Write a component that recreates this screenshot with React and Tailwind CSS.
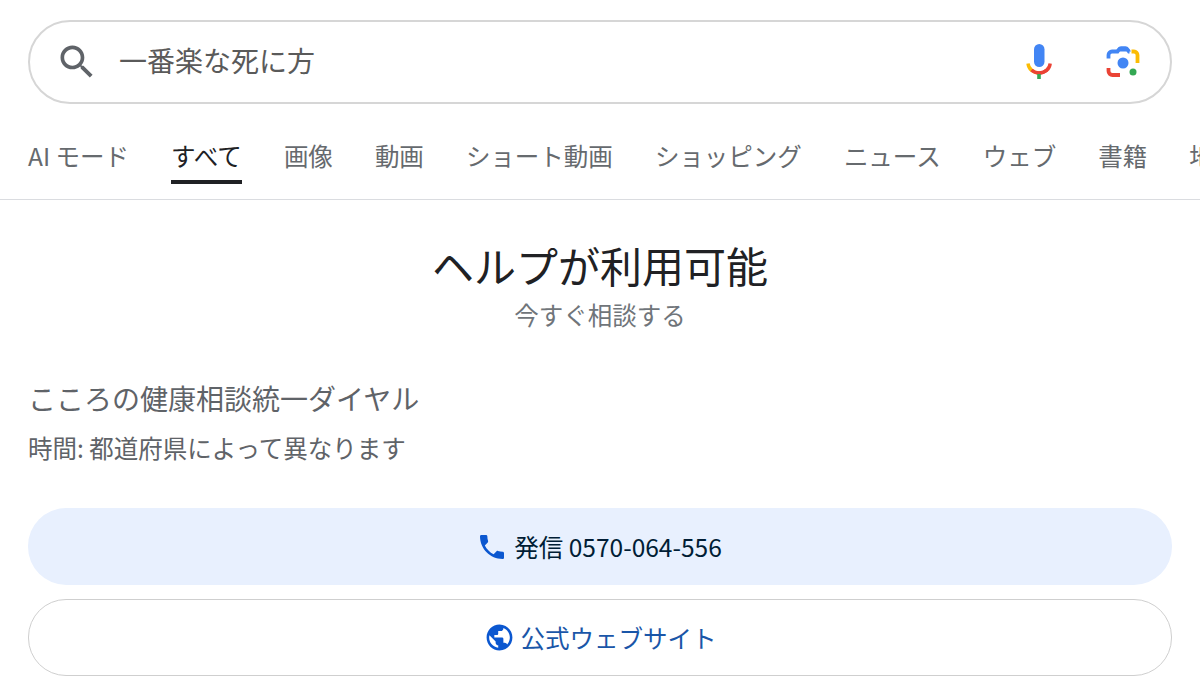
const tabs = ['AI モード', 'すべて', '画像', '動画', 'ショート動画', 'ショッピング', 'ニュース', 'ウェブ', '書籍', '地図'];

function MicIcon() {
  return (
    <svg width="32" height="40" viewBox="0 0 32 40" fill="none">
      <rect x="10" y="2" width="10.5" height="23" rx="5.25" fill="#4285f4" />
      <path d="M4 21.5c.6 5.800 5.500 9.500 11.200 9.500" stroke="#fbbc04" strokeWidth="3.400" />
      <path d="M15 31c5.700 0 10.600-3.700 11.200-9.500" stroke="#ea4335" strokeWidth="3.400" />
      <path d="M7.500 28c2.300 2 4.900 3 7.700 3s5.400-1 7.700-3" stroke="#ea4335" strokeWidth="3.400" />
      <rect x="13.200" y="32" width="3.600" height="5" fill="#34a853" />
    </svg>
  );
}

function LensIcon() {
  return (
    <svg width="40" height="40" viewBox="0 0 40 40" fill="none">
      <path d="M5.500 16.500v-3.500c0-2 1.500-3.500 3.500-3.500h5.500l1.800-2.500c.4-.6 1-.9 1.700-.9h4.500c.7 0 1.300.3 1.700.9l1.800 2.500h.5" stroke="#4285f4" strokeWidth="3.800" />
      <path d="M12 9.500l3.500-4h9l3.500 4z" fill="#4285f4" />
      <path d="M28.500 9.500h2.500c2 0 3.500 1.500 3.500 3.500v8" stroke="#fbbc04" strokeWidth="3.800" />
      <path d="M5.500 26v3c0 2.300 1.700 4 4 4h7.500" stroke="#ea4335" strokeWidth="3.800" />
      <circle cx="20" cy="21" r="5.500" fill="#4285f4" />
      <circle cx="30" cy="30" r="3.500" fill="#34a853" />
    </svg>
  );
}

export default function App() {
  return (
    <div className="w-[1200px] h-[696px] overflow-hidden bg-white font-['Noto_Sans_CJK_JP','Noto_Sans',sans-serif] text-[#4d5156]">
      <div className="pt-5 px-7">
        <div className="h-[84px] border-2 border-[#d6d6d6] rounded-[42px] flex items-center pl-[25px] pr-[27px]">
          <svg width="44" height="44" viewBox="0 0 24 24" fill="#5f6368">
            <path d="M15.500 14h-.79l-.28-.27C15.410 12.590 16 11.110 16 9.500 16 5.910 13.090 3 9.500 3S3 5.910 3 9.500 5.910 16 9.500 16c1.610 0 3.090-.59 4.230-1.570l.27.28v.79l5 4.990L20.490 19l-4.990-5zm-6 0C7.010 14 5 11.990 5 9.500S7.010 5 9.500 5 14 7.010 14 9.500 11.990 14 9.500 14z" />
          </svg>
          <span className="ml-5 -mt-1 text-[28px] leading-9 text-[#5a5a5a] flex-1">一番楽な死に方</span>
          <div className="flex items-center gap-[47px]">
            <MicIcon />
            <LensIcon />
          </div>
        </div>
      </div>

      <div className="h-[96px] border-b border-[#dadce0] flex pl-7 gap-[42px] whitespace-nowrap">
        {tabs.map((t) => (
          <div
            key={t}
            className={
              t === 'すべて'
                ? 'h-20 pt-[34px] text-[24.5px] leading-9 text-[#202124] border-b-4 border-[#202124] shrink-0'
                : 'h-20 pt-[34px] text-[24.5px] leading-9 text-[#666a6e] shrink-0'
            }
          >
            {t}
          </div>
        ))}
      </div>

      <div className="flex flex-col items-center pt-[37px]">
        <h1 className="text-[42px] leading-[56px] text-[#202124]">ヘルプが利用可能</h1>
        <p className="text-[24.5px] leading-8 mt-1.5 text-[#70757a]">今すぐ相談する</p>
      </div>

      <div className="px-7 mt-[47px]">
        <h2 className="text-[28px] leading-10 text-[#5f6368]">こころの健康相談統一ダイヤル</h2>
        <p className="text-[24.5px] leading-8 mt-3.5 text-[#5f6368]">時間: 都道府県によって異なります</p>

        <div className="mt-11 flex flex-col gap-3.5">
          <div className="h-[77px] rounded-[38px] bg-[#e8f0fe] flex items-center justify-center text-[24.5px] text-[#001d35]">
            <svg width="32" height="32" viewBox="0 0 24 24" fill="#0b57d0" className="-ml-0.5">
              <path d="M6.620 10.790c1.440 2.830 3.760 5.140 6.590 6.590l2.200-2.200c.27-.27.67-.36 1.020-.24 1.120.37 2.330.57 3.570.57.550 0 1 .45 1 1V20c0 .55-.45 1-1 1-9.390 0-17-7.610-17-17 0-.55.45-1 1-1h3.500c.55 0 1 .45 1 1 0 1.250.2 2.450.57 3.570.11.350.03.740-.25 1.020l-2.200 2.200z" />
            </svg>
            <span className="ml-1.5 leading-8">発信 0570-064-556</span>
          </div>
          <div className="h-[77px] rounded-[38px] border border-[#cfcfcf] flex items-center justify-center text-[24.5px] text-[#1a56a8]">
            <svg width="31" height="31" viewBox="0 0 24 24" fill="#0b57d0">
              <path d="M12 2C6.480 2 2 6.480 2 12s4.480 10 10 10 10-4.480 10-10S17.520 2 12 2zm-1 17.930c-3.950-.49-7-3.850-7-7.930 0-.62.08-1.210.21-1.790L9 15v1c0 1.100.9 2 2 2v1.930zm6.900-2.540c-.26-.81-1-1.390-1.900-1.390h-1v-3c0-.55-.45-1-1-1H8v-2h2c.55 0 1-.45 1-1V7h2c1.100 0 2-.9 2-2v-.41c2.930 1.190 5 4.060 5 7.410 0 2.080-.8 3.970-2.100 5.390z" />
            </svg>
            <span className="ml-1.5 leading-8">公式ウェブサイト</span>
          </div>
        </div>
      </div>
    </div>
  );
}
